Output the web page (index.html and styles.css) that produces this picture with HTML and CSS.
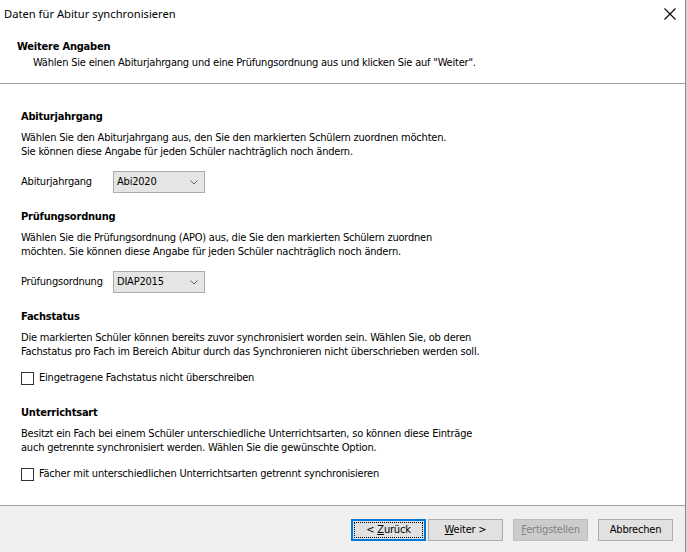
FILE: index.html
```html
<!DOCTYPE html>
<html lang="de">
<head>
<meta charset="utf-8">
<title>Daten für Abitur synchronisieren</title>
<link rel="stylesheet" href="styles.css">
</head>
<body>
<div class="window">
  <div class="titlebar">
    <span class="title">Daten für Abitur synchronisieren</span>
    <span class="close">
      <svg width="12" height="12" viewBox="0 0 12 12"><path d="M0.5 0.5 L11.5 11.5 M11.5 0.5 L0.5 11.5" stroke="#000" stroke-width="1.1" fill="none"/></svg>
    </span>
  </div>
  <div class="header">
    <div class="header-title">Weitere Angaben</div>
    <div class="header-sub">Wählen Sie einen Abiturjahrgang und eine Prüfungsordnung aus und klicken Sie auf "Weiter".</div>
  </div>
  <div class="content">
    <section class="section">
      <h2 class="sec-title">Abiturjahrgang</h2>
      <p class="sec-desc">Wählen Sie den Abiturjahrgang aus, den Sie den markierten Schülern zuordnen möchten.<br>Sie können diese Angabe für jeden Schüler nachträglich noch ändern.</p>
      <div class="combo-row">
        <span class="combo-label">Abiturjahrgang</span>
        <div class="combo"><span>Abi2020</span><svg class="chev" width="8" height="5" viewBox="0 0 8 5"><path d="M0.5 0.5 L4 4 L7.5 0.5" stroke="#606060" fill="none"/></svg></div>
      </div>
    </section>
    <section class="section">
      <h2 class="sec-title">Prüfungsordnung</h2>
      <p class="sec-desc">Wählen Sie die Prüfungsordnung (APO) aus, die Sie den markierten Schülern zuordnen<br>möchten. Sie können diese Angabe für jeden Schüler nachträglich noch ändern.</p>
      <div class="combo-row">
        <span class="combo-label">Prüfungsordnung</span>
        <div class="combo"><span>DIAP2015</span><svg class="chev" width="8" height="5" viewBox="0 0 8 5"><path d="M0.5 0.5 L4 4 L7.5 0.5" stroke="#606060" fill="none"/></svg></div>
      </div>
    </section>
    <section class="section">
      <h2 class="sec-title">Fachstatus</h2>
      <p class="sec-desc">Die markierten Schüler können bereits zuvor synchronisiert worden sein. Wählen Sie, ob deren<br>Fachstatus pro Fach im Bereich Abitur durch das Synchronieren nicht überschrieben werden soll.</p>
      <label class="check-row"><span class="box"></span><span>Eingetragene Fachstatus nicht überschreiben</span></label>
    </section>
    <section class="section">
      <h2 class="sec-title">Unterrichtsart</h2>
      <p class="sec-desc">Besitzt ein Fach bei einem Schüler unterschiedliche Unterrichtsarten, so können diese Einträge<br>auch getrennte synchronisiert werden. Wählen Sie die gewünschte Option.</p>
      <label class="check-row"><span class="box"></span><span>Fächer mit unterschiedlichen Unterrichtsarten getrennt synchronisieren</span></label>
    </section>
  </div>
  <div class="footer">
    <button class="btn btn-default"><span class="focus"><span>&lt; <u>Z</u>urück</span></span></button>
    <button class="btn"><span><u>W</u>eiter &gt;</span></button>
    <button class="btn btn-disabled"><span><u>F</u>ertigstellen</span></button>
    <button class="btn"><span>Abbrechen</span></button>
  </div>
</div>
</body>
</html>
```

FILE: styles.css
```css
* { box-sizing: border-box; }
html, body {
  margin: 0;
  padding: 0;
  width: 687px;
  height: 552px;
  overflow: hidden;
  background: #d9d9d9;
}
body {
  font-family: "DejaVu Sans Condensed", "DejaVu Sans", sans-serif;
  font-size: 11px;
  letter-spacing: -0.21px;
  line-height: 14px;
  color: #000;
}
.window {
  width: 686px;
  height: 552px;
  background: #fff;
  border-right: 1px solid #8a8a8a;
  display: flex;
  flex-direction: column;
}
.titlebar {
  height: 30px;
  flex: none;
  display: flex;
  justify-content: space-between;
  align-items: flex-start;
  padding: 6px 9px 0 4px;
}
.title {
  font-family: "Noto Sans", "Open Sans", sans-serif;
  font-size: 11.2px;
  letter-spacing: 0;
  line-height: 15px;
}
.close {
  display: flex;
  padding-top: 2px;
}
.header {
  height: 54px;
  flex: none;
  padding: 9px 0 0 17px;
  border-bottom: 1px solid #a0a0a0;
  box-shadow: 0 1px 0 #fff;
}
.header-title {
  font-weight: bold;
  line-height: 16px;
}
.header-sub {
  line-height: 16px;
  padding-left: 16px;
}
.content {
  flex: 1;
  padding: 26px 0 0 21px;
  display: flex;
  flex-direction: column;
  gap: 17px;
}
.section { margin: 0; }
.sec-title {
  margin: 0;
  font-size: 11px;
  line-height: 14px;
  font-weight: bold;
}
.sec-desc {
  margin: 7px 0 0;
}
.combo-row {
  margin-top: 12px;
  height: 22px;
  display: flex;
  align-items: center;
}
.combo-label { width: 92px; }
.combo {
  width: 92px;
  height: 22px;
  background: #e5e5e5;
  border: 1px solid #acacac;
  display: flex;
  align-items: center;
  justify-content: space-between;
  padding: 0 6px 0 3px;
}
.chev { display: block; }
.check-row {
  margin-top: 8px;
  height: 22px;
  display: flex;
  align-items: center;
  gap: 5px;
}
.box {
  width: 13px;
  height: 13px;
  border: 1px solid #333;
  background: #fff;
  flex: none;
}
.footer {
  height: 47px;
  flex: none;
  background: #f0f0f0;
  border-top: 1px solid #a0a0a0;
  display: flex;
  justify-content: flex-end;
  align-items: flex-start;
  padding: 13px 12px 0 0;
}
.btn {
  width: 75px;
  height: 22px;
  margin-left: 10px;
  background: #e1e1e1;
  border: 1px solid #adadad;
  font-family: inherit;
  font-size: 11px;
  letter-spacing: -0.21px;
  line-height: 14px;
  color: #000;
  padding: 0;
  display: flex;
  align-items: center;
  justify-content: center;
}
.btn-default {
  border: 2px solid #0078d7;
  margin-left: 0;
  padding: 1px;
}
.btn-default + .btn { margin-left: 2px; }
.focus {
  width: 100%;
  height: 100%;
  border: 1px dotted #000;
  display: flex;
  align-items: center;
  justify-content: center;
}
.btn-disabled {
  background: #cccccc;
  border-color: #bfbfbf;
  color: #838383;
}
```
